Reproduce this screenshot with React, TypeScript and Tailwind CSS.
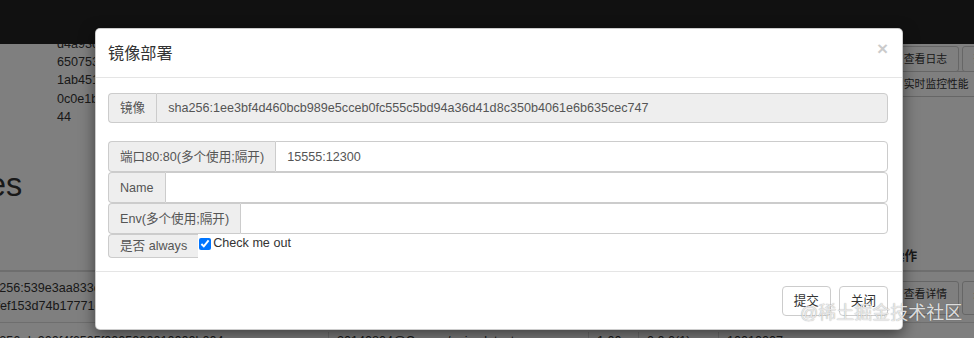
import type { ReactNode } from 'react';

function PageBtn({ children, className = '' }: { children: ReactNode; className?: string }) {
  return (
    <div
      className={`shrink-0 whitespace-nowrap border border-[#ccc] rounded-[3px] bg-white px-[10.8px] text-[10.8px] leading-[24px] text-[#333] ${className}`}
    >
      {children}
    </div>
  );
}

function BackgroundPage() {
  const hashLines = ['d4a93c7e21f0b8', '650753b18c2d9a', '1ab4510e9fa3c1', '0c0e1b6d4c58e2', '44'];
  return (
    <div className="isolate">
      {/* navbar */}
      <div className="relative z-10 h-[44px] bg-[#222]" />

      {/* detail block */}
      <div className="-mt-[9px] flex">
        <div className="flex-1 pl-[57px] leading-[18.2px]">
          {hashLines.map((l) => (
            <div key={l} className="whitespace-nowrap">
              {l}
            </div>
          ))}
        </div>
        <div className="w-[82px] shrink-0 pt-[11px]">
          <div className="flex gap-[3px]">
            <PageBtn>查看日志</PageBtn>
            <PageBtn>查看详情</PageBtn>
          </div>
          <PageBtn className="-mt-px w-fit">实时监控性能</PageBtn>
        </div>
      </div>

      <div className="mt-[41px] -ml-[84px] whitespace-nowrap text-[32.4px] leading-[36px]">Images</div>

      {/* table */}
      <div className="mt-[38px]">
        <div className="flex h-[31px] items-center border-b-2 border-[#ddd]">
          <div className="flex-1" />
          <div className="w-[82px] shrink-0 font-bold">操作</div>
        </div>
        <div className="flex border-b border-[#ddd] py-[7px]">
          <div className="-ml-[21px] flex-1 whitespace-nowrap">
            <div>sha256:539e3aa833c4d7a1b</div>
            <div>a2:fef153d74b17771e0c2a8</div>
          </div>
          <div className="flex w-[82px] shrink-0 gap-[3px] pt-[2px]">
            <PageBtn>查看详情</PageBtn>
            <PageBtn>删除</PageBtn>
          </div>
        </div>
        <div className="flex whitespace-nowrap pt-[9px]">
          <div className="-ml-[21px] w-[350px] border-r border-[#ddd]">sha256:de900f4f6505f0005000010000b004a</div>
          <div className="w-[260px] border-r border-[#ddd] pl-[8px]">20140804@Connor/nginx:latest</div>
          <div className="w-[50px] border-r border-[#ddd] pl-[8px]">1.00</div>
          <div className="w-[80px] border-r border-[#ddd] pl-[8px]">0.0.0(1)</div>
          <div className="pl-[8px]">10010007</div>
        </div>
      </div>
    </div>
  );
}

function Addon({ children, tall = true }: { children: ReactNode; tall?: boolean }) {
  return (
    <span
      className={`flex shrink-0 items-center whitespace-nowrap rounded-l-[4px] border border-r-0 border-[#ccc] bg-[#eee] px-[11px] text-[#555] ${
        tall ? 'h-full' : 'h-[24px]'
      }`}
    >
      {children}
    </span>
  );
}

function Field({ label, value = '', disabled = false, h = 'h-[31px]' }: { label: string; value?: string; disabled?: boolean; h?: string }) {
  return (
    <div className={`flex ${h}`}>
      <Addon>{label}</Addon>
      <div
        className={`flex flex-1 items-center whitespace-nowrap rounded-r-[4px] border border-[#ccc] px-[11px] text-[#555] ${
          disabled ? 'bg-[#eee]' : 'bg-white'
        }`}
      >
        {value}
      </div>
    </div>
  );
}

function FooterBtn({ children }: { children: ReactNode }) {
  return (
    <button className="h-[30px] rounded-[4px] border border-[#ccc] bg-white px-[11px] text-[12.6px] text-[#333]">
      {children}
    </button>
  );
}

function DeployModal() {
  return (
    <div className="absolute left-[95px] top-[28px] w-[808px] rounded-[5px] border border-black/20 bg-white shadow-[0_5px_15px_rgba(0,0,0,0.5)]">
      <div className="flex items-start justify-between border-b border-[#e5e5e5] py-[13px] pl-[12px] pr-[14px]">
        <h4 className="text-[16.2px] leading-[22px] text-[#333]">镜像部署</h4>
        <button className="-mt-[3px] text-[19px] font-bold leading-none text-black opacity-20">×</button>
      </div>

      <div className="pb-[13px] pl-[12px] pr-[14px] pt-[15px]">
        <Field
          label="镜像"
          value="sha256:1ee3bf4d460bcb989e5cceb0fc555c5bd94a36d41d8c350b4061e6b635cec747"
          disabled
          h="h-[30px]"
        />
        <div className="mt-[18px]">
          <Field label="端口80:80(多个使用;隔开)" value="15555:12300" />
          <Field label="Name" />
          <Field label="Env(多个使用;隔开)" />
          <div className="flex items-start">
            <Addon tall={false}>是否 always</Addon>
            <label className="flex items-start">
              <input type="checkbox" checked readOnly className="ml-[1px] mt-[4px] h-[12px] w-[12px] accent-[#0075ff]" />
              <span className="ml-[2px] leading-[18px] text-[#333]">Check me out</span>
            </label>
          </div>
        </div>
      </div>

      <div className="flex justify-end gap-[8px] border-t border-[#e5e5e5] pb-[13px] pl-[12px] pr-[14px] pt-[14px]">
        <FooterBtn>提交</FooterBtn>
        <FooterBtn>关闭</FooterBtn>
      </div>
    </div>
  );
}

export default function App() {
  return (
    <div className="relative h-[338px] w-[974px] overflow-hidden bg-white font-['Liberation_Sans','Noto_Sans_CJK_SC',sans-serif] text-[12.6px] leading-[18px] text-[#333]">
      <BackgroundPage />
      <div className="absolute inset-0 bg-black/50" />
      <DeployModal />
      {/* watermark */}
      <div className="pointer-events-none absolute left-[800px] top-[302px] whitespace-nowrap text-[18px] leading-[22px] text-[#f0f0f0]/90 [text-shadow:0_0_1px_rgba(0,0,0,0.4)]">
        @稀土掘金技术社区
      </div>
    </div>
  );
}
